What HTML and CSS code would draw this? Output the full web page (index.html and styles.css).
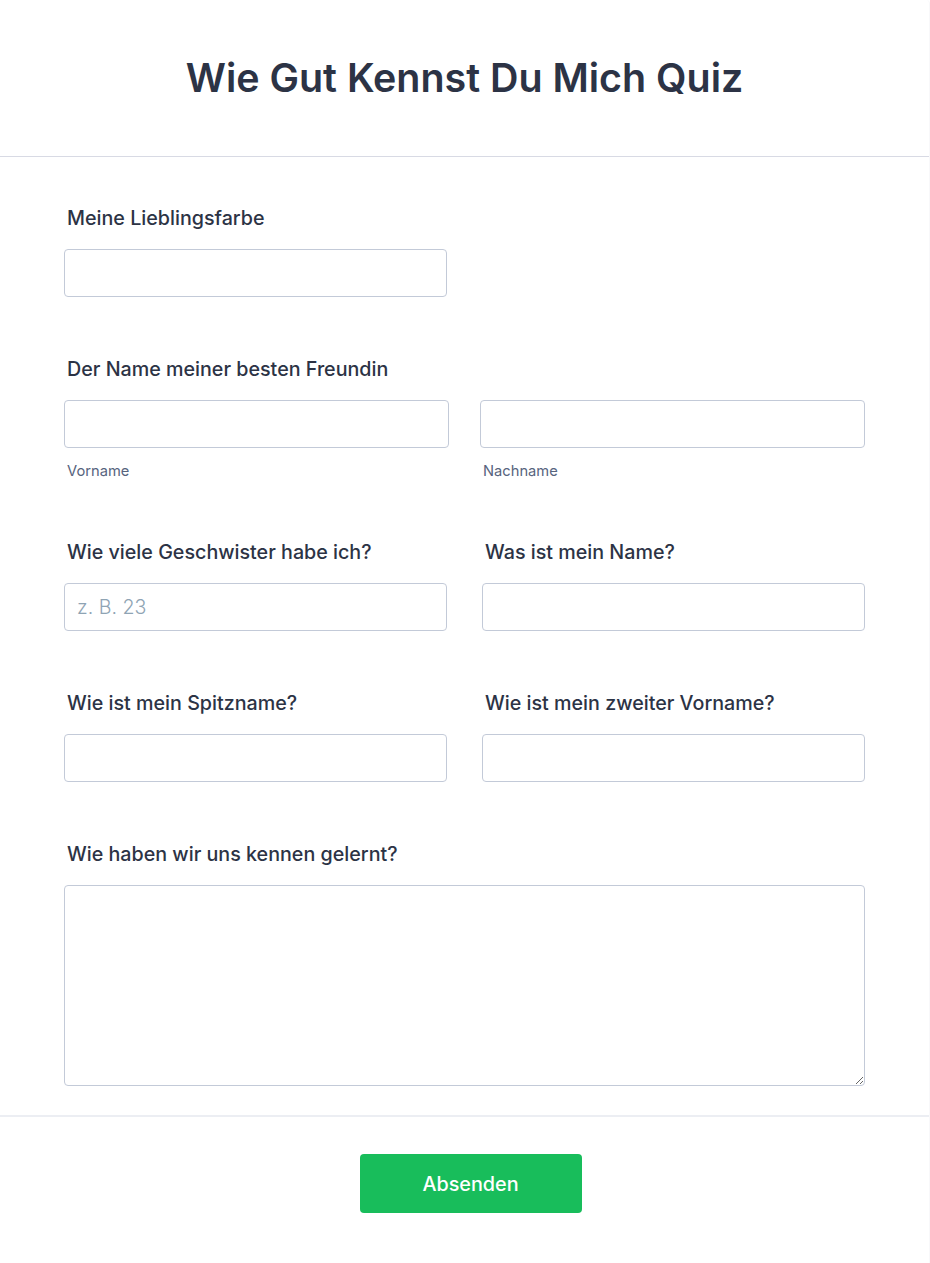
FILE: index.html
```html
<!DOCTYPE html>
<html>
<head>
    <meta charset="utf-8">
    <link rel="stylesheet" href="styles.css">
</head>
<body>
<form class="quiz-form">

    <div class="quiz-form__header">
        <h1 class="quiz-form__title">Wie Gut Kennst Du Mich Quiz</h1>
    </div>

    <div class="quiz-form__body">
        <div class="form-row">
            <div class="form-field">
                <label class="form-label" for="farbe">Meine Lieblingsfarbe</label>
                <input class="form-input" id="farbe" type="text">
            </div>
        </div>

        <div class="form-row">
            <div class="form-field form-field--full">
                <label class="form-label" for="vorname">Der Name meiner besten Freundin</label>
                <div class="name-inputs">
                    <div class="name-inputs__item">
                        <input class="form-input" id="vorname" type="text">
                        <span class="form-sublabel">Vorname</span>
                    </div>
                    <div class="name-inputs__item">
                        <input class="form-input" id="nachname" type="text">
                        <span class="form-sublabel">Nachname</span>
                    </div>
                </div>
            </div>
        </div>

        <div class="form-row form-row--split">
            <div class="form-field">
                <label class="form-label" for="geschwister">Wie viele Geschwister habe ich?</label>
                <input class="form-input" id="geschwister" type="text" placeholder="z. B. 23">
            </div>
            <div class="form-field">
                <label class="form-label" for="name">Was ist mein Name?</label>
                <input class="form-input" id="name" type="text">
            </div>
        </div>

        <div class="form-row form-row--split">
            <div class="form-field">
                <label class="form-label" for="spitzname">Wie ist mein Spitzname?</label>
                <input class="form-input" id="spitzname" type="text">
            </div>
            <div class="form-field">
                <label class="form-label" for="zweiter">Wie ist mein zweiter Vorname?</label>
                <input class="form-input" id="zweiter" type="text">
            </div>
        </div>

        <div class="form-row">
            <div class="form-field form-field--full">
                <label class="form-label" for="kennen">Wie haben wir uns kennen gelernt?</label>
                <textarea class="form-input form-textarea" id="kennen"></textarea>
            </div>
        </div>
    </div>

    <div class="quiz-form__footer">
        <button class="submit-button" type="button">Absenden</button>
    </div>

</form>
</body>
</html>
```

FILE: styles.css
```css
html, body {
    margin: 0;
    background-color: #ffffff;
    color: #2c3345;
    font-family: Inter, "Noto Sans", sans-serif;
}

.quiz-form {
    width: 930px;
    min-height: 1263px;
    box-sizing: border-box;
    border-right: 1px solid #f8f8fa;
    border-top-right-radius: 4px;
    background-color: #ffffff;
}

.quiz-form__header {
    height: 156px;
    display: flex;
    align-items: center;
    justify-content: center;
    border-bottom: 1px solid #d8dae4;
}

.quiz-form__title {
    margin: 0 0 1px 0;
    font-size: 39.4px;
    font-weight: 600;
    line-height: 48px;
    color: #2c3345;
}

.quiz-form__body {
    padding: 51px 64px 29px 64px;
    display: flex;
    flex-direction: column;
    gap: 62px;
}

.form-row {
    display: flex;
}

.form-row--split {
    gap: 35px;
}

.form-field {
    width: 383px;
    display: flex;
    flex-direction: column;
}

.form-field--full {
    width: 801px;
}

.form-label {
    font-size: 19.7px;
    font-weight: 500;
    line-height: 20px;
    margin: 0 0 21px 3px;
    color: #2c3345;
}

.form-input {
    box-sizing: border-box;
    width: 100%;
    height: 48px;
    margin: 0;
    padding: 0 12px;
    border: 1px solid #c3cad8;
    border-radius: 4px;
    background-color: #ffffff;
    font-family: Inter, "Noto Sans", sans-serif;
    font-size: 19.6px;
    color: #2c3345;
}

.form-input::placeholder {
    color: #8fa4b4;
    font-weight: 300;
}

.form-textarea {
    height: 201px;
    padding: 10px 12px;
    resize: vertical;
}

.name-inputs {
    display: flex;
    gap: 31px;
}

.name-inputs__item {
    width: 385px;
    display: flex;
    flex-direction: column;
}

.form-sublabel {
    margin: 14px 0 0 3px;
    font-size: 14.7px;
    line-height: 18px;
    color: #57647e;
}

.quiz-form__footer {
    border-top: 2px solid #eceef3;
    padding: 37px 0 50px 0;
    display: flex;
    justify-content: center;
}

.submit-button {
    width: 222px;
    height: 59px;
    border: none;
    border-radius: 4px;
    background-color: #18bd5b;
    color: #ffffff;
    font-family: Inter, "Noto Sans", sans-serif;
    font-size: 19.8px;
    font-weight: 500;
    cursor: pointer;
    margin-left: 12px;
}
```
